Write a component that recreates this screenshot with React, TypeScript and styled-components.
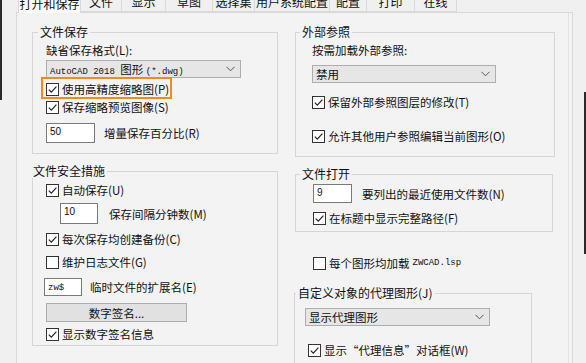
import React from "react";
import styled, { createGlobalStyle } from "styled-components";

const GlobalStyle = createGlobalStyle`
  html, body {
    margin: 0;
    padding: 0;
  }
  body {
    width: 586px;
    height: 363px;
    overflow: hidden;
    background:
      linear-gradient(#2a2a2a, #2a2a2a) 0 0 / 2px 100px no-repeat,
      linear-gradient(#2a2a2a, #2a2a2a) 584px 92px / 2px 162px no-repeat,
      #f0f0f0;
    font-family: "Noto Sans CJK SC", "Noto Sans", sans-serif;
    font-size: 11.5px;
    color: #111;
  }
`;

const Dialog = styled.div`
  width: 586px;
  height: 363px;
  overflow: hidden;
`;

const TabBar = styled.div`
  display: flex;
  margin-top: -10px;
  padding-left: 18px;
  height: 22px;
  position: relative;
  z-index: 1;
`;

const Tab = styled.div<{ $w: number; $active?: boolean }>`
  width: ${(p) => p.$w}px;
  box-sizing: border-box;
  height: ${(p) => (p.$active ? 23 : 22)}px;
  display: flex;
  align-items: flex-end;
  justify-content: center;
  padding-bottom: 2px;
  line-height: 14px;
  font-size: 12px;
  background: ${(p) => (p.$active ? "#fbfbfb" : "#f0f0f0")};
  border: 1px solid #d9d9d9;
  border-bottom: ${(p) => (p.$active ? "none" : "1px solid #d9d9d9")};
  border-left: ${(p) => (p.$active ? "1px solid #d9d9d9" : "none")};
  white-space: nowrap;
`;

const Page = styled.div`
  margin-left: 16px;
  width: 557px;
  height: 360px;
  box-sizing: border-box;
  border: 1px solid #d9d9d9;
  box-shadow: inset -3px 0 0 #f3f3f3, inset -4px 0 0 #e2e2e2;
  background: #f3f3f3;
  padding: 12px 0 0 15px;
  display: grid;
  grid-template-columns: 246px 260px;
  column-gap: 17px;
  align-items: start;
`;

const Column = styled.div`
  display: flex;
  flex-direction: column;
  align-items: flex-start;
`;

const Group = styled.fieldset<{
  $w: number;
  $pad: string;
  $top?: number;
  $left?: number;
}>`
  margin: ${(p) => p.$top ?? 0}px 0 0 ${(p) => p.$left ?? 0}px;
  width: ${(p) => p.$w}px;
  box-sizing: border-box;
  border: 1px solid #d6d6d6;
  padding: ${(p) => p.$pad};
  display: flex;
  flex-direction: column;
  align-items: flex-start;
  min-inline-size: 0;
`;

const Legend = styled.legend<{ $ml: number }>`
  margin-left: ${(p) => p.$ml}px;
  padding: 0 2px;
  line-height: 14px;
  font-size: 12px;
`;

const Label = styled.div`
  line-height: 14px;
  white-space: nowrap;
`;

const Row = styled.div<{ $mt?: number; $ml?: number; $gap?: number }>`
  display: flex;
  align-items: center;
  margin-top: ${(p) => p.$mt ?? 0}px;
  margin-left: ${(p) => p.$ml ?? 0}px;
  gap: ${(p) => p.$gap ?? 3}px;
  white-space: nowrap;
  line-height: 14px;
`;

const Box = styled.span`
  width: 13px;
  height: 13px;
  box-sizing: border-box;
  border: 1px solid #333;
  background: #fff;
  display: inline-flex;
  flex-shrink: 0;
`;

const Highlight = styled.div`
  margin: -1px 0 0 -5px;
  width: 131px;
  height: 22px;
  box-sizing: border-box;
  border: 2px solid #f08a24;
  padding: 3px 0 0 3px;
`;

const Select = styled.div<{ $w: number; $mt?: number }>`
  width: ${(p) => p.$w}px;
  height: 18px;
  box-sizing: border-box;
  margin-top: ${(p) => p.$mt ?? 0}px;
  background: #e6e6e6;
  border: 1px solid #adadad;
  display: flex;
  align-items: center;
  justify-content: space-between;
  padding: 0 5px 0 3px;
  white-space: nowrap;
`;

const Mono = styled.span`
  font-family: "Liberation Mono", monospace;
  font-size: 9px;
`;

const TextBox = styled.div<{ $w: number; $h: number }>`
  width: ${(p) => p.$w}px;
  height: ${(p) => p.$h}px;
  box-sizing: border-box;
  background: #fff;
  border: 1px solid #7a7a7a;
  padding: 2px 3px;
  font-family: "Liberation Sans", sans-serif;
  font-size: 10px;
  line-height: 12px;
  flex-shrink: 0;
`;

const Button = styled.div`
  width: 141px;
  height: 19px;
  box-sizing: border-box;
  background: #e1e1e1;
  border: 1px solid #adadad;
  display: flex;
  align-items: center;
  justify-content: center;
`;

const Check = ({ checked = true }: { checked?: boolean }) => (
  <Box>
    {checked && (
      <svg width="11" height="11" viewBox="0 0 11 11">
        <path d="M1.8 5.6 L4.3 8.1 L9.4 2.6" fill="none" stroke="#222" strokeWidth="1.2" />
      </svg>
    )}
  </Box>
);

const Chevron = () => (
  <svg width="9" height="6" viewBox="0 0 9 6">
    <path d="M0.5 0.8 L4.5 4.8 L8.5 0.8" fill="none" stroke="#555" strokeWidth="1" />
  </svg>
);

const tabs: [string, number][] = [
  ["打开和保存", 63],
  ["文件", 41],
  ["显示", 44],
  ["草图", 47],
  ["选择集", 42],
  ["用户系统配置", 75],
  ["配置", 37],
  ["打印", 48],
  ["在线", 42],
];

const App = () => {
  return (
    <>
      <GlobalStyle />
      <Dialog>
        <TabBar>
          {tabs.map(([name, w], i) => (
            <Tab key={name} $w={w} $active={i === 0}>
              {name}
            </Tab>
          ))}
        </TabBar>
        <Page>
          <Column>
            <Group $w={246} $pad="4px 0 10px 13px">
              <Legend $ml={-8}>文件保存</Legend>
              <Label>缺省保存格式(L):</Label>
              <Select $w={195} $mt={3}>
                <span>
                  <Mono>AutoCAD 2018 </Mono>图形 <Mono>(*.dwg)</Mono>
                </span>
                <Chevron />
              </Select>
              <Highlight>
                <Row>
                  <Check />
                  使用高精度缩略图(P)
                </Row>
              </Highlight>
              <Row $mt={1}>
                <Check />
                保存缩略预览图像(S)
              </Row>
              <Row $mt={9} $gap={9}>
                <TextBox $w={49} $h={20}>50</TextBox>
                增量保存百分比(R)
              </Row>
            </Group>

            <Group $w={246} $pad="5px 0 4px 13px" $top={10}>
              <Legend $ml={-15}>文件安全措施</Legend>
              <Row>
                <Check />
                自动保存(U)
              </Row>
              <Row $mt={6} $ml={14} $gap={11}>
                <TextBox $w={38} $h={21}>10</TextBox>
                保存间隔分钟数(M)
              </Row>
              <Row $mt={8}>
                <Check />
                每次保存均创建备份(C)
              </Row>
              <Row $mt={9}>
                <Check checked={false} />
                维护日志文件(G)
              </Row>
              <Row $mt={9} $ml={-2} $gap={8}>
                <TextBox $w={38} $h={18}>
                  <Mono>zw$</Mono>
                </TextBox>
                临时文件的扩展名(E)
              </Row>
              <Row $mt={7}>
                <Button>数字签名...</Button>
              </Row>
              <Row $mt={5}>
                <Check />
                显示数字签名信息
              </Row>
            </Group>
          </Column>

          <Column>
            <Group $w={260} $pad="4px 0 13px 16px">
              <Legend $ml={-12}>外部参照</Legend>
              <Label>按需加载外部参照:</Label>
              <Select $w={184} $mt={8}>
                <span>禁用</span>
                <Chevron />
              </Select>
              <Row $mt={12}>
                <Check />
                保留外部参照图层的修改(T)
              </Row>
              <Row $mt={20}>
                <Check />
                允许其他用户参照编辑当前图形(O)
              </Row>
            </Group>

            <Group $w={258} $pad="3px 0 6px 17px" $top={10}>
              <Legend $ml={-13}>文件打开</Legend>
              <Row $gap={10}>
                <TextBox $w={39} $h={19}>9</TextBox>
                要列出的最近使用文件数(N)
              </Row>
              <Row $mt={8}>
                <Check />
                在标题中显示完整路径(F)
              </Row>
            </Group>

            <Row $mt={24} $ml={18}>
              <Check checked={false} />
              每个图形均加载 <Mono>ZWCAD.lsp</Mono>
            </Row>

            <Group $w={238} $pad="8px 0 20px 10px" $top={16} $left={-1}>
              <Legend $ml={-9}>自定义对象的代理图形(J)</Legend>
              <Select $w={185}>
                <span>显示代理图形</span>
                <Chevron />
              </Select>
              <Row $mt={17} $ml={3}>
                <Check />
                显示“代理信息”对话框(W)
              </Row>
            </Group>
          </Column>
        </Page>
      </Dialog>
    </>
  );
};

export default App;
